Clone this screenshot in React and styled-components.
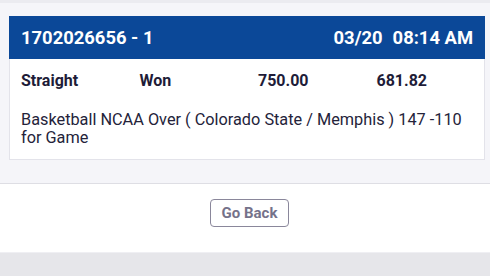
import React from "react";
import styled, { createGlobalStyle } from "styled-components";

const Global = createGlobalStyle`
  html, body { margin: 0; padding: 0; background: #ffffff; }
  body { font-family: Roboto, "Liberation Sans", Arial, sans-serif; }
`;

const Panel = styled.section`
  background: #f5f5f9;
  border-top: 3px solid #ebebf0;
  border-bottom: 1px solid #dedee4;
  padding: 13px 0 23px 9px;
`;

const Card = styled.article`
  width: 474px;
  background: #ffffff;
  border: 1px solid #e3e3ea;
`;

const Header = styled.header`
  height: 43px;
  margin: -1px -1px 0 -1px;
  background: #0b4898;
  color: #ffffff;
  display: flex;
  align-items: center;
  justify-content: space-between;
  padding: 0 12px;
  font-size: 18.4px;
  font-weight: 700;
`;

const DateGroup = styled.span`
  display: flex;
  gap: 10px;
`;

const Row = styled.div`
  display: grid;
  grid-template-columns: repeat(4, 118.5px);
  padding: 13px 0 0 11px;
  font-size: 16px;
  line-height: 18px;
  font-weight: 700;
  color: #1e1c38;
`;

const Desc = styled.p`
  margin: 0;
  padding: 21px 12px 12px 11px;
  font-size: 16.3px;
  line-height: 18px;
  color: #24233a;
`;

const Footer = styled.div`
  height: 68px;
  display: flex;
  justify-content: center;
  align-items: flex-start;
  padding: 15px 0 0 9px;
  box-sizing: border-box;
`;

const Button = styled.button`
  width: 79px;
  height: 28px;
  border: 1px solid #8a879b;
  border-radius: 4px;
  background: #ffffff;
  color: #75728a;
  font-family: Roboto, "Liberation Sans", Arial, sans-serif;
  font-size: 15px;
  font-weight: 700;
  padding: 0;
  cursor: pointer;
`;

const Bottom = styled.div`
  height: 24px;
  background: #e6e6ea;
  border-top: 1px solid #efeff3;
`;

export default function App() {
  return (
    <>
      <Global />
      <Panel>
        <Card>
          <Header>
            <span>1702026656 - 1</span>
            <DateGroup>
              <span>03/20</span>
              <span>08:14 AM</span>
            </DateGroup>
          </Header>
          <Row>
            <span>Straight</span>
            <span>Won</span>
            <span>750.00</span>
            <span>681.82</span>
          </Row>
          <Desc>
            Basketball NCAA Over ( Colorado State / Memphis ) 147 -110 for Game
          </Desc>
        </Card>
      </Panel>
      <Footer>
        <Button>Go Back</Button>
      </Footer>
      <Bottom />
    </>
  );
}
